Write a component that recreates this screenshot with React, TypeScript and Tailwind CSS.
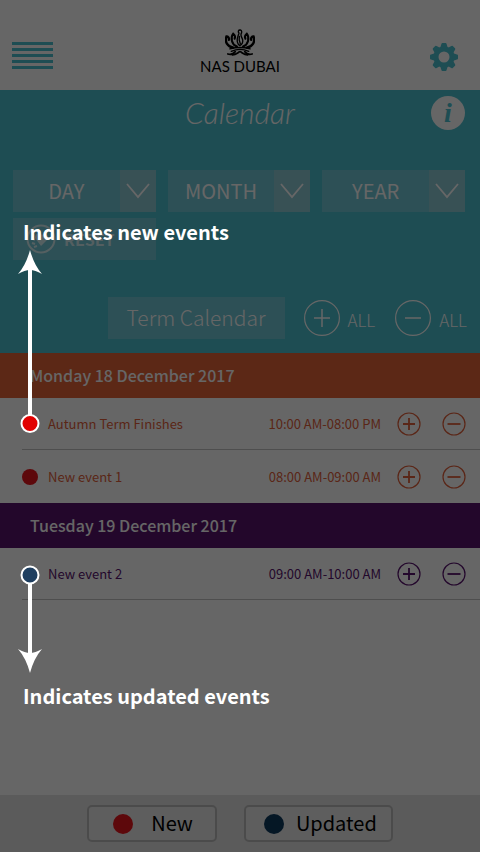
import type { ReactNode } from "react";

type Tone = { text: string; bar: string };

const orange: Tone = { text: "text-[#e2603a]", bar: "bg-[#e66439]" };
const purple: Tone = { text: "text-[#58126e]", bar: "bg-[#57126b]" };

const days = [
  {
    title: "Monday 18 December 2017",
    tone: orange,
    events: [
      { name: "Autumn Term Finishes", time: "10:00 AM-08:00 PM", dot: "bg-[#e8141c]" },
      { name: "New event 1", time: "08:00 AM-09:00 AM", dot: "bg-[#e8141c]" },
    ],
  },
  {
    title: "Tuesday 19 December 2017",
    tone: purple,
    events: [{ name: "New event 2", time: "09:00 AM-10:00 AM", dot: "bg-[#0e3a5e]" }],
  },
];

function Crown() {
  return (
    <svg viewBox="0 0 88 80" className="h-[27px] w-[30px]" fill="none" stroke="#000" strokeLinecap="round" aria-hidden="true">
      <path d="M45 3c-6-1-8 6-4 9-2 8-7 15-5 26 1 5 4 9 8 11 5-3 9-9 8-16-1-8-6-9-5-18 3-5 3-11-2-12Z" strokeWidth="4" />
      <path d="M42 22c-2 8 0 14 3 22" strokeWidth="4" />
      <path d="M35 52C19 46 15 26 24 14c5 4 7 9 4 15M53 52c16-6 20-26 11-38-5 4-7 9-4 15" strokeWidth="6" />
      <path d="M24 55C6 51-2 38 4 22c5 0 8 4 7 10M64 55c18-4 26-17 20-33-5 0-8 4-7 10" strokeWidth="7" />
      <path d="M14 59c18-5 42-5 60 0M18 66c16-7 36-7 52 0" strokeWidth="4" />
      <path d="M8 74c10 3 18-2 22-7M80 74c-10 3-18-2-22-7M22 77c10 0 14-6 22-10 8 4 12 10 22 10" strokeWidth="5" />
    </svg>
  );
}

function Gear() {
  return (
    <svg viewBox="-14 -14 28 28" className="size-7" aria-hidden="true">
      <circle r="8" fill="none" stroke="#4bc1d0" strokeWidth="5" />
      <g fill="#4bc1d0">
        {[0, 45, 90, 135, 180, 225, 270, 315].map((a) => (
          <path key={a} d="M-4-8.500L-2.600-13Q-2.400-14-1.600-14H1.600Q2.400-14 2.600-13L4-8.500Z" transform={`rotate(${a})`} />
        ))}
      </g>
    </svg>
  );
}

function Round({ minus, large }: { minus?: boolean; large?: boolean }) {
  return large ? (
    <svg viewBox="0 0 36 36" className="size-9" fill="none" stroke="currentColor" aria-hidden="true">
      <circle cx="18" cy="18" r="17.400" strokeWidth="1.200" />
      <path d={minus ? "M10 18h16" : "M10 18h16M18 9v18"} strokeWidth="1.500" />
    </svg>
  ) : (
    <svg viewBox="0 0 24 24" className="size-6" fill="none" stroke="currentColor" aria-hidden="true">
      <circle cx="12" cy="12" r="11" strokeWidth="1.200" />
      <path d={minus ? "M5.500 12h13" : "M6 12h12M12 6v12"} strokeWidth="1.800" />
    </svg>
  );
}

function Filter({ label }: { label: string }) {
  return (
    <div className="relative h-[42px] bg-[#70c8d7]">
      <select
        aria-label={label}
        className="h-full w-full appearance-none pr-9 text-center text-xl leading-6 font-normal text-white outline-none"
      >
        <option>{label}</option>
      </select>
      <span className="pointer-events-none absolute inset-y-0 right-0 flex w-9 items-center justify-center bg-[#8ccad5]">
        <svg viewBox="0 0 24 16" className="h-4 w-6" fill="none" stroke="#fff" strokeWidth="1.800" aria-hidden="true">
          <path d="M1 1l11 13L23 1" />
        </svg>
      </span>
    </div>
  );
}

function Legend({ dot, children }: { dot: string; children: ReactNode }) {
  return (
    <button type="button" className="flex h-[37px] items-center rounded-[5px] border-2 border-[#bcbcbc] bg-[#ebebeb] text-xl leading-6 text-black">
      <span className={`size-5 rounded-full ${dot}`} />
      {children}
    </button>
  );
}

export default function App() {
  return (
    <div className="relative flex min-h-screen flex-col overflow-hidden bg-white font-['Noto_Sans_CJK_SC','Noto_Sans',sans-serif]">
      <header className="grid h-[90px] grid-cols-[1fr_auto_1fr] items-end px-3 pb-3.5">
        <button type="button" aria-label="Menu" className="mb-[7px] flex w-[41px] flex-col gap-[3px]">
          {[0, 1, 2, 3, 4].map((i) => (
            <span key={i} className="h-[3px] w-full bg-[#4bc1d0]" />
          ))}
        </button>
        <div className="flex flex-col items-center">
          <Crown />
          <span className="font-[Lato] text-[15px] leading-5 text-black">NAS DUBAI</span>
        </div>
        <button type="button" aria-label="Settings" className="mr-2.5 mb-[5px] justify-self-end">
          <Gear />
        </button>
      </header>

      <section className="flex h-[263px] flex-col bg-[#4bc1d0] text-white">
        <div className="grid h-20 grid-cols-[1fr_auto_1fr] items-start px-[15px] pt-1.5">
          <h1 className="col-start-2 font-[Lato] text-[30px] leading-8 font-light italic">Calendar</h1>
          <button
            type="button"
            aria-label="Information"
            className="flex size-[34px] items-center justify-center justify-self-end rounded-full bg-white font-['Liberation_Serif'] text-[28px] leading-8 font-bold text-[#4bc1d0] italic"
          >
            i
          </button>
        </div>
        <div className="grid grid-cols-3 gap-x-3 gap-y-1.5 pr-[15px] pl-[13px]">
          <Filter label="DAY" />
          <Filter label="MONTH" />
          <Filter label="YEAR" />
          <button type="button" className="flex h-[42px] items-center gap-2 bg-[#70c8d7] pl-[13px] text-base leading-6 font-bold text-white/70">
            <svg viewBox="0 0 30 30" className="size-[30px]" fill="none" stroke="currentColor" aria-hidden="true">
              <circle cx="15" cy="15" r="13.500" strokeWidth="2" />
              <path d="M15 22l-6-8c0-5 5-6 7-3 3-3 8 0 5 5Z" fill="currentColor" stroke="none" />
              <path d="M6 19l3 1M8 23l3-1M7 15l2 1" strokeWidth="2" />
            </svg>
            RESET
          </button>
        </div>
        <div className="mt-[37px] flex items-center justify-end pr-[13px]">
          <button type="button" className="h-[42px] w-[177px] bg-[#70c8d7] pb-0.5 text-[21px] leading-7 font-light">
            Term Calendar
          </button>
          <button type="button" className="ml-[19px] flex items-center gap-2 text-[17px] leading-6 font-light">
            <Round large />
            <span className="pt-1">ALL</span>
          </button>
          <button type="button" className="ml-5 flex items-center gap-2 text-[17px] leading-6 font-light">
            <Round large minus />
            <span className="pt-1">ALL</span>
          </button>
        </div>
      </section>

      <main className="flex-1">
        {days.map((day, d) => (
          <section key={day.title}>
            <h2 className={`flex h-[45px] items-center pb-0.5 pl-[30px] text-base leading-6 font-medium text-white ${day.tone.bar}`}>{day.title}</h2>
            <ul className={day.tone.text}>
              {day.events.map((event, i) => {
                const ruled = d === 1 || i === 0;
                return (
                  <li
                    key={event.name}
                    className={`ml-[22px] flex items-center pr-[14px] text-[13px] leading-5 ${ruled ? "h-[52px] border-b border-[#c4c4c4]" : "h-[53px]"}`}
                  >
                    <span className={`mr-2.5 size-4 rounded-full ${event.dot}`} />
                    <span className="flex-1">{event.name}</span>
                    <span>{event.time}</span>
                    <button type="button" aria-label={`Add ${event.name}`} className="ml-4">
                      <Round />
                    </button>
                    <button type="button" aria-label={`Remove ${event.name}`} className="ml-[21px]">
                      <Round minus />
                    </button>
                  </li>
                );
              })}
            </ul>
          </section>
        ))}
      </main>

      <footer className="flex h-[57px] items-start justify-center gap-[27px] bg-[#e3e3e3] pt-2.5">
        <Legend dot="ml-6 bg-[#e8141c]">
          <span className="mr-[22px] ml-[18px] pb-0.5">New</span>
        </Legend>
        <Legend dot="ml-[18px] bg-[#0e3a5e]">
          <span className="mr-3.5 ml-3 pb-0.5">Updated</span>
        </Legend>
      </footer>

      <div className="pointer-events-none absolute inset-0 bg-black/60 text-xl leading-6 font-bold text-white">
        <p className="absolute top-[220px] left-[23px]">Indicates new events</p>
        <svg viewBox="0 0 26 184" className="absolute top-[250px] left-[17px] h-[184px] w-[26px]" aria-hidden="true">
          <path d="M13 18V166" stroke="#fff" strokeWidth="4" />
          <path d="M13 0Q17 15 25 24Q18 20 13 20Q8 20 1 24Q9 15 13 0Z" fill="#fff" />
          <circle cx="13" cy="173.500" r="8.500" fill="#e10000" stroke="#fff" strokeWidth="2" />
        </svg>
        <svg viewBox="0 0 26 110" className="absolute top-[564px] left-[17px] h-[110px] w-[26px]" aria-hidden="true">
          <path d="M13 19V91" stroke="#fff" strokeWidth="4" />
          <path d="M13 109Q17 94 25 85Q18 89 13 89Q8 89 1 85Q9 94 13 109Z" fill="#fff" />
          <circle cx="13" cy="11" r="8.500" fill="#1f3f60" stroke="#fff" strokeWidth="2" />
        </svg>
        <p className="absolute top-[684px] left-[23px]">Indicates updated events</p>
      </div>
    </div>
  );
}
